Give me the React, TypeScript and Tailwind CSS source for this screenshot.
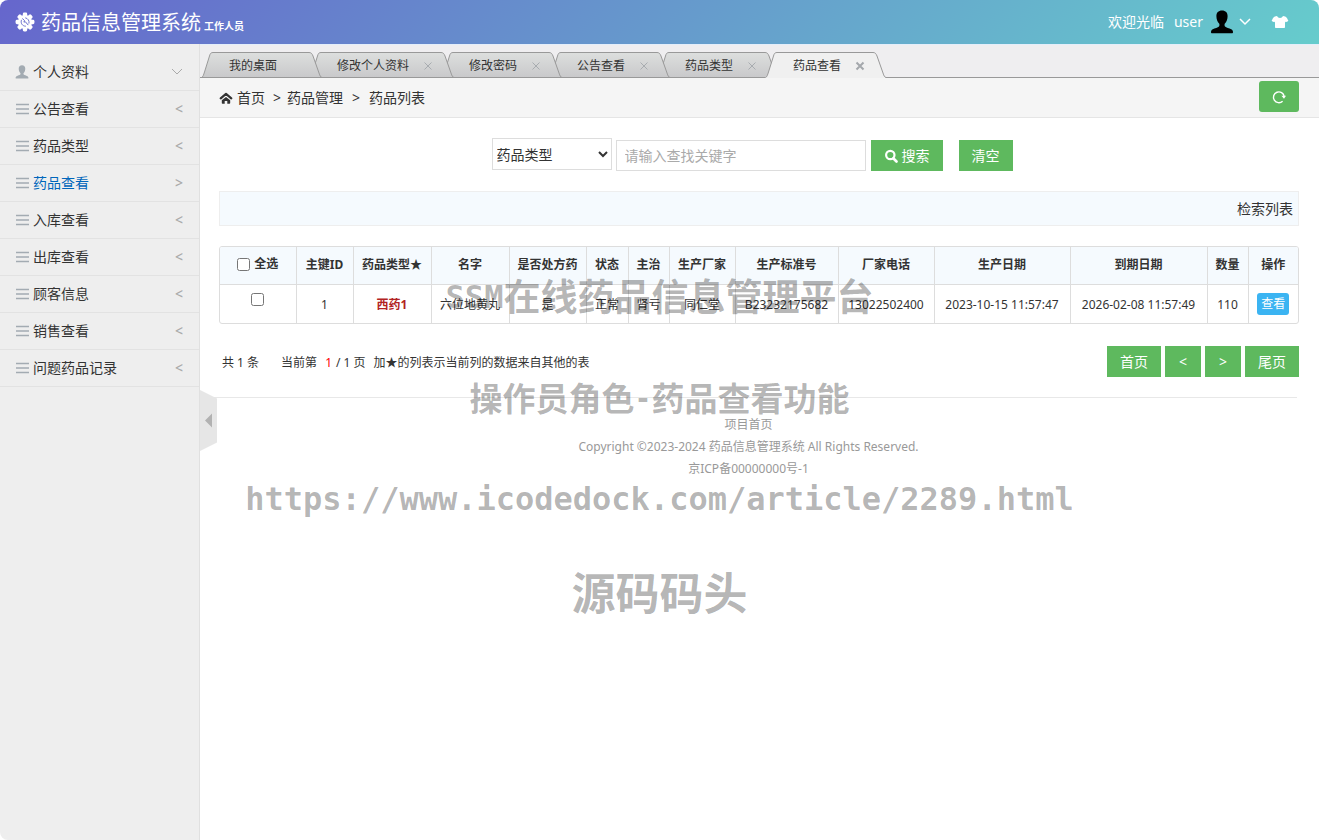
import clsx from "clsx";

const menu = [
  { label: "公告查看" },
  { label: "药品类型" },
  { label: "药品查看", active: true },
  { label: "入库查看" },
  { label: "出库查看" },
  { label: "顾客信息" },
  { label: "销售查看" },
  { label: "问题药品记录" },
];

const tabs = [
  { label: "我的桌面", width: 121, fixed: true },
  { label: "修改个人资料", width: 145 },
  { label: "修改密码", width: 121 },
  { label: "公告查看", width: 121 },
  { label: "药品类型", width: 121 },
  { label: "药品查看", width: 121, active: true },
];

const columns = [
  { title: "主键ID", col: "w-[57px]" },
  { title: "药品类型★", col: "w-[78px]" },
  { title: "名字", col: "w-[78px]" },
  { title: "是否处方药", col: "w-[77px]" },
  { title: "状态", col: "w-[42px]" },
  { title: "主治", col: "w-[41px]" },
  { title: "生产厂家", col: "w-[66px]" },
  { title: "生产标准号", col: "w-[103px]" },
  { title: "厂家电话", col: "w-[96px]" },
  { title: "生产日期", col: "w-[136px]" },
  { title: "到期日期", col: "w-[137px]" },
  { title: "数量", col: "w-[41px]" },
  { title: "操作", col: "w-[50px]" },
];

const rows = [
  [
    "1",
    "西药1",
    "六位地黄丸",
    "是",
    "正常",
    "肾亏",
    "同仁堂",
    "B23232175682",
    "13022502400",
    "2023-10-15 11:57:47",
    "2026-02-08 11:57:49",
    "110",
  ],
];

function GearIcon() {
  return (
    <svg viewBox="0 0 20 20" className="size-5" aria-hidden="true">
      <g fill="#fff">
        <circle cx="10" cy="10" r="7" />
        {[0, 45, 90, 135, 180, 225, 270, 315].map((deg) => (
          <rect key={deg} x="7.800" y="0.600" width="4.400" height="5" rx="1.400" transform={`rotate(${deg} 10 10)`} />
        ))}
      </g>
      <g fill="none" stroke="#6669cc" strokeLinecap="round">
        <path d="M6.400 8.200A4.200 4.200 0 0 0 10.500 14.200" strokeWidth="0.900" />
        <path d="M10.600 5.900A4.200 4.200 0 0 1 14 11.200" strokeWidth="0.900" />
        <path d="M7.600 6.800l1.900 1.700-.6 1.600 1.500-.3 2.600 3" strokeWidth="1" />
      </g>
    </svg>
  );
}

function PersonIcon({ className }: { className?: string }) {
  return (
    <svg viewBox="0 0 22 24" className={className} fill="currentColor" aria-hidden="true">
      <path d="M11 .6c3.700 0 5.600 2.200 5.600 5.700 0 3.200-1.200 5.700-2.700 7.200-.5.600-.5 2.300.1 2.900 1.200 1.100 4.200 1.700 6.200 2.900 1.300.8 1.800 1.600 1.800 2.900 0 .6-.4 1-1.100 1H1.100C.4 23.200 0 22.800 0 22.200c0-1.300.5-2.100 1.800-2.900 2-1.200 5-1.800 6.200-2.900.6-.6.6-2.300.1-2.900C6.600 12 5.400 9.500 5.400 6.300 5.400 2.800 7.300.6 11 .6z" />
    </svg>
  );
}

function ListIcon() {
  return (
    <svg viewBox="0 0 14 12" className="h-3 w-3.5" stroke="#a3abb2" strokeWidth="1.500" aria-hidden="true">
      <path d="M1 1.500h13M1 6h13M1 10.500h13" />
    </svg>
  );
}

function Chevron({ className }: { className?: string }) {
  return (
    <svg viewBox="0 0 12 12" className={className} fill="none" stroke="currentColor" aria-hidden="true">
      <path d="M1 3l5 5 5-5" />
    </svg>
  );
}

function ShirtIcon() {
  return (
    <svg viewBox="0 0 18 14" className="h-3.5 w-[18px]" fill="currentColor" aria-hidden="true">
      <path d="M6 1c.6 1.300 1.700 1.900 3 1.900S11.400 2.300 12 1l2.200.5c.8.300 1.400.9 1.900 1.700L17.400 6l-2.700 1.300-.7-.9V12c0 .6-.4 1-1 1H5c-.6 0-1-.4-1-1V6.400l-.7.9L.6 6l1.300-2.800c.5-.8 1.100-1.400 1.900-1.700z" />
    </svg>
  );
}

function HomeIcon() {
  return (
    <svg viewBox="0 0 14 12" className="h-3 w-3.5" aria-hidden="true">
      <path d="M1.700 6.300L7 1.900l5.300 4.400" fill="none" stroke="#333" strokeWidth="2.200" strokeLinecap="round" strokeLinejoin="round" />
      <path d="M7 4.900l4.200 3.400V11c0 .4-.3.700-.7.700H8.300V9H5.700v2.700H3.500c-.4 0-.7-.3-.7-.7V8.300z" fill="#333" />
    </svg>
  );
}

function SearchIcon() {
  return (
    <svg viewBox="0 0 14 14" className="size-3.5" fill="none" stroke="#fff" aria-hidden="true">
      <circle cx="6.300" cy="6" r="4.200" strokeWidth="2.200" />
      <path d="M9.500 9.500l3 3" strokeWidth="2.600" strokeLinecap="round" />
    </svg>
  );
}

function RefreshIcon() {
  return (
    <svg viewBox="0 0 14 14" className="size-3.5" aria-hidden="true">
      <path d="M10.600 11.200A5.400 5.400 0 1 1 12.200 6.500" fill="none" stroke="#fff" strokeWidth="1.400" />
      <path d="M9.400 5.800H14L12 8.800z" fill="#fff" />
    </svg>
  );
}

/** Trapezoid behind a tab label; the active one opens onto the toolbar below. */
function TabShape({ width, active }: { width: number; active?: boolean }) {
  const outline = `M0.500 25.500C2 25 2.500 23 3.500 20L8.500 4C9.200 1.500 10 .5 12 .5H${width - 13}C${width - 11} .5 ${width - 10} 1.500 ${width - 9} 4L${width - 3} 21C${width - 2} 24 ${width - 1.5} 25 ${width} 25.500`;
  return (
    <svg
      viewBox={`0 0 ${width} 26`}
      width={width}
      height={26}
      className="absolute inset-0"
      aria-hidden="true"
    >
      <defs>
        <linearGradient id={`tab-${active ? "on" : "off"}`} x1="0" y1="0" x2="0" y2="1">
          <stop offset="0" stopColor={active ? "#f0f0f0" : "#dddfde"} />
          <stop offset="1" stopColor={active ? "#f0f0f0" : "#c8c8ca"} />
        </linearGradient>
      </defs>
      <path d={`${outline}V26H0z`} fill={`url(#tab-${active ? "on" : "off"})`} />
      <path d={outline} fill="none" stroke="#999" />
      {!active && <path d={`M0 25.500H${width}`} stroke="#999" />}
    </svg>
  );
}

function Header() {
  return (
    <header className="flex h-11 items-center justify-between bg-[linear-gradient(135deg,#6666cc,#66cccc)] pr-[30px] pl-[15px] text-white">
      <div className="flex items-center gap-1.5">
        <GearIcon />
        <h1 className="flex items-baseline gap-[3px] pt-0.5 text-xl">
          药品信息管理系统
          <small className="text-[10px] font-bold">工作人员</small>
        </h1>
      </div>
      <div className="flex items-center text-sm">
        <span>欢迎光临</span>
        <span className="ml-2.5">user</span>
        <button type="button" aria-label="用户菜单" className="ml-2 flex items-center gap-1.5">
          <PersonIcon className="h-6 w-[22px] text-black" />
          <Chevron className="size-3 stroke-[1.5]" />
        </button>
        <button type="button" aria-label="换肤" className="ml-5">
          <ShirtIcon />
        </button>
      </div>
    </header>
  );
}

function Sidebar() {
  return (
    <aside className="w-[200px] shrink-0 border-r border-[#e0e0e0] bg-[#eee] pt-2.5">
      <nav>
        <a href="#profile" className="flex h-[37px] items-center gap-1 border-b border-[#e2e2e2] pr-4 pl-[15px]">
          <PersonIcon className="h-3.5 w-3.5 text-[#a3abb2]" />
          <span className="flex-1">个人资料</span>
          <Chevron className="size-3 text-[#aaa]" />
        </a>
        {menu.map((item) => (
          <a
            key={item.label}
            href="#menu"
            className={clsx(
              "flex h-[37px] items-center gap-1 border-b border-[#e2e2e2] pr-4 pl-[15px]",
              item.active && "text-[#0066bb]",
            )}
          >
            <ListIcon />
            <span className="flex-1">{item.label}</span>
            <span className="font-medium text-[#aaa]">{item.active ? ">" : "<"}</span>
          </a>
        ))}
      </nav>
    </aside>
  );
}

function TabBar() {
  return (
    <div className="flex h-[34px] items-end border-t border-b border-t-[#e4eefa] border-b-[#999] bg-[#efeef0] pl-px">
      {tabs.map((tab, i) => (
        <div
          key={tab.label}
          className="relative -mr-[13px] -mb-px flex h-[26px] shrink-0 items-center gap-3.5 pt-0.5 pl-7 text-xs"
          style={{ width: tab.width, zIndex: tab.active ? 20 : 10 - i }}
        >
          <TabShape width={tab.width} active={tab.active} />
          <button type="button" className="relative">
            {tab.label}
          </button>
          {!tab.fixed && (
            <button type="button" aria-label={`关闭${tab.label}`} className="relative">
              <svg
                viewBox="0 0 10 10"
                className={clsx("size-2.5", tab.active ? "stroke-[#a4a8ac] stroke-2" : "stroke-[#a8acb0] stroke-1")}
              >
                <path d="M1.500 1.500l7 7M8.500 1.500l-7 7" />
              </svg>
            </button>
          )}
        </div>
      ))}
    </div>
  );
}

function Breadcrumb() {
  return (
    <div className="flex h-10 items-center justify-between border-b border-[#e5e5e5] bg-[#f5f5f5] pr-5 pl-[19px]">
      <nav className="flex items-center" aria-label="位置">
        <HomeIcon />
        <a href="#home" className="ml-1">
          首页
        </a>
        <span className="mr-1.5 ml-2">&gt;</span>
        <span>药品管理</span>
        <span className="mx-[9px]">&gt;</span>
        <span>药品列表</span>
      </nav>
      <button
        type="button"
        aria-label="刷新"
        className="mb-0.5 flex h-[31px] w-10 items-center justify-center rounded-[3px] bg-[#5eb95e]"
      >
        <RefreshIcon />
      </button>
    </div>
  );
}

function SearchForm() {
  return (
    <form className="flex items-start justify-center pr-3.5">
      <select
        aria-label="查找字段"
        className="mr-1 h-8 w-[120px] border border-[#ddd] bg-white text-sm"
        defaultValue="type"
      >
        <option value="type">药品类型</option>
      </select>
      <input
        type="text"
        aria-label="关键字"
        placeholder="请输入查找关键字"
        className="mt-0.5 mr-[5px] h-[31px] w-[250px] border border-[#ddd] px-2 text-sm placeholder:text-[#aaa]"
      />
      <button
        type="button"
        className="mt-0.5 mr-4 flex h-[31px] w-[72px] items-center justify-center gap-1 bg-[#5eb95e] text-white"
      >
        <SearchIcon />
        搜索
      </button>
      <button type="reset" className="mt-0.5 h-[31px] w-[54px] bg-[#5eb95e] text-white">
        清空
      </button>
    </form>
  );
}

function DrugTable() {
  return (
    <div className="mt-5 overflow-hidden rounded-[3px] border border-[#ddd]">
      <table className="w-full table-fixed border-collapse text-center text-xs whitespace-nowrap">
        <colgroup>
          <col className="w-[76px]" />
          {columns.map((c) => (
            <col key={c.title} className={c.col} />
          ))}
        </colgroup>
        <thead className="bg-[#f5fafe]">
          <tr className="h-[37px] border-b border-[#ddd]">
            <th>
              <label className="inline-flex items-center gap-1">
                <input type="checkbox" className="size-[13px]" />
                全选
              </label>
            </th>
            {columns.map((c) => (
              <th key={c.title} className="border-l border-[#ddd]">
                {c.title}
              </th>
            ))}
          </tr>
        </thead>
        <tbody>
          {rows.map((row) => (
            <tr key={row[0]} className="h-[39px]">
              <td className="pb-1">
                <input type="checkbox" aria-label={`选择${row[0]}`} className="size-[13px]" />
              </td>
              {row.map((cell, i) => (
                <td key={i} className={clsx("border-l border-[#ddd] pt-0.5", i === 1 && "font-bold text-[#b22222]")}>
                  {cell}
                </td>
              ))}
              <td className="border-l border-[#ddd]">
                <button type="button" className="h-[22px] w-8 rounded-[3px] bg-[#3bb4f2] text-white">
                  查看
                </button>
              </td>
            </tr>
          ))}
        </tbody>
      </table>
    </div>
  );
}

function Pagination() {
  return (
    <div className="mt-[22px] flex items-center justify-between">
      <p className="flex pt-0.5 pl-[3px] text-xs">
        <span className="mr-[22px]">共 1 条</span>
        <span className="mr-2">当前第</span>
        <span className="mr-1 text-[#f00]">1</span>
        <span className="mr-2">/ 1 页</span>
        <span>加★的列表示当前列的数据来自其他的表</span>
      </p>
      <div className="flex gap-1">
        {["首页", "<", ">", "尾页"].map((label) => (
          <button key={label} type="button" className="h-[31px] min-w-9 bg-[#5eb95e] px-[13px] text-white">
            {label}
          </button>
        ))}
      </div>
    </div>
  );
}

function Footer() {
  return (
    <footer className="mt-5 mr-[22px] border-t border-[#e8e8e8] pt-4 text-center text-xs leading-[22px] text-[#999]">
      <a href="#home" className="block">
        项目首页
      </a>
      <p>Copyright ©2023-2024 药品信息管理系统 All Rights Reserved.</p>
      <p>京ICP备00000000号-1</p>
    </footer>
  );
}

/** Source stamp laid over the whole page. */
function Watermark() {
  return (
    <div className="pointer-events-none absolute inset-x-0 top-[274px] z-30 flex flex-col items-center font-bold text-black/30">
      <p className="flex items-center text-[37px] leading-[46px]">
        <span className="font-['DejaVu_Sans_Mono',monospace] text-[32px]">SSM</span>
        在线药品信息管理平台
      </p>
      <p className="mt-14 flex items-center text-[33px] leading-[46px]">
        操作员角色
        <span className="font-['DejaVu_Sans_Mono',monospace] text-[28px]">-</span>
        药品查看功能
      </p>
      <p className="mt-[54px] font-['DejaVu_Sans_Mono',monospace] text-[32px] leading-[46px]">
        https://www.icodedock.com/article/2289.html
      </p>
      <p className="mt-12 text-[44px] leading-[46px]">源码码头</p>
    </div>
  );
}

export default function App() {
  return (
    <div className="relative flex min-h-screen flex-col overflow-hidden rounded-lg bg-white font-['Noto_Sans','Noto_Sans_CJK_SC',sans-serif] text-sm text-[#333]">
      <Header />
      <div className="flex flex-1">
        <Sidebar />
        <main className="relative min-w-0 flex-1">
          <TabBar />
          <Breadcrumb />
          <div className="pt-5 pr-5 pl-[19px]">
            <SearchForm />
            <div className="mt-5 flex h-[35px] items-center justify-end border border-[#eee] bg-[#f5fafe] pr-[5px]">
              检索列表
            </div>
            <DrugTable />
            <Pagination />
          </div>
          <Footer />
          <button type="button" aria-label="收起菜单" className="absolute top-[346px] left-0">
            <svg viewBox="0 0 17 61" className="h-[61px] w-[17px]">
              <path d="M0 0l17 8.500v44L0 61z" fill="#e6e6e6" />
              <path d="M5 30.500l7-7v14z" fill="#b2b2b2" />
            </svg>
          </button>
        </main>
      </div>
      <Watermark />
    </div>
  );
}
